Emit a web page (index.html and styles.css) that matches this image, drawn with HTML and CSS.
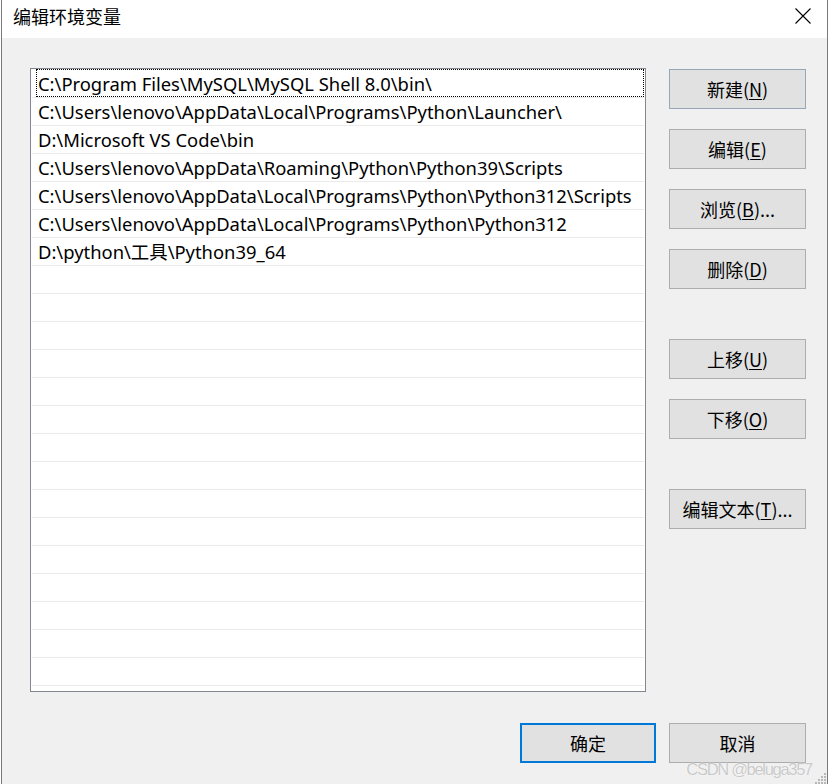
FILE: index.html
```html
<!DOCTYPE html>
<html lang="zh-CN">
<head>
<meta charset="utf-8">
<title>编辑环境变量</title>
<link rel="stylesheet" href="styles.css">
</head>
<body>
<div class="dialog">
  <div class="titlebar">
    <span class="title">编辑环境变量</span>
    <svg class="close" width="16" height="16" viewBox="0 0 16 16"><path d="M0.5 0.5 L15.5 15.5 M15.5 0.5 L0.5 15.5" stroke="#000" stroke-width="1.1" fill="none"/></svg>
  </div>
  <div class="content">
    <div class="main">
      <div class="list">
        <div class="row focused">C:\Program Files\MySQL\MySQL Shell 8.0\bin\</div>
        <div class="row">C:\Users\lenovo\AppData\Local\Programs\Python\Launcher\</div>
        <div class="row">D:\Microsoft VS Code\bin</div>
        <div class="row">C:\Users\lenovo\AppData\Roaming\Python\Python39\Scripts</div>
        <div class="row">C:\Users\lenovo\AppData\Local\Programs\Python\Python312\Scripts</div>
        <div class="row">C:\Users\lenovo\AppData\Local\Programs\Python\Python312</div>
        <div class="row">D:\python\工具\Python39_64</div>
        <div class="row"></div><div class="row"></div><div class="row"></div><div class="row"></div>
        <div class="row"></div><div class="row"></div><div class="row"></div><div class="row"></div>
        <div class="row"></div><div class="row"></div><div class="row"></div><div class="row"></div>
        <div class="row"></div><div class="row"></div><div class="row"></div><div class="row"></div>
      </div>
      <div class="side">
        <button class="btn hot">新建(<u>N</u>)</button>
        <button class="btn">编辑(<u>E</u>)</button>
        <button class="btn">浏览(<u>B</u>)...</button>
        <button class="btn">删除(<u>D</u>)</button>
        <button class="btn group">上移(<u>U</u>)</button>
        <button class="btn">下移(<u>O</u>)</button>
        <button class="btn group">编辑文本(<u>T</u>)...</button>
      </div>
    </div>
    <div class="footer">
      <button class="btn default">确定</button>
      <button class="btn">取消</button>
    </div>
  </div>
  <div class="watermark">CSDN @beluga357</div>
  <svg class="grip" width="12" height="12" viewBox="0 0 12 12">
    <rect x="9" y="1" width="2" height="2" fill="#b8b8b8"/>
    <rect x="6" y="4" width="2" height="2" fill="#b8b8b8"/>
    <rect x="9" y="4" width="2" height="2" fill="#b8b8b8"/>
    <rect x="3" y="7" width="2" height="2" fill="#b8b8b8"/>
    <rect x="6" y="7" width="2" height="2" fill="#b8b8b8"/>
    <rect x="9" y="7" width="2" height="2" fill="#b8b8b8"/>
    <rect x="0" y="10" width="2" height="2" fill="#b8b8b8"/>
    <rect x="3" y="10" width="2" height="2" fill="#b8b8b8"/>
    <rect x="6" y="10" width="2" height="2" fill="#b8b8b8"/>
    <rect x="9" y="10" width="2" height="2" fill="#b8b8b8"/>
  </svg>
</div>
</body>
</html>
```

FILE: styles.css
```css
* { box-sizing: border-box; }
html, body {
  margin: 0;
  padding: 0;
  width: 832px;
  height: 784px;
  overflow: hidden;
  background: #ffffff;
}
body {
  font-family: "Noto Sans", "Noto Sans CJK SC", sans-serif;
  font-size: 18px;
  color: #000;
}
.dialog {
  position: relative;
  margin-left: 1px;
  width: 827px;
  height: 784px;
  border-left: 1px solid #7a7a7a;
  border-right: 1px solid #7a7a7a;
  display: flex;
  flex-direction: column;
  background: #f0f0f0;
}
.titlebar {
  height: 38px;
  background: #ffffff;
  display: flex;
  align-items: center;
  padding-left: 11px;
  padding-right: 16px;
}
.title {
  font-family: "Noto Sans CJK SC", sans-serif;
  font-size: 18px;
  line-height: 1;
  margin-top: -7px;
}
.close {
  margin-left: auto;
  margin-top: -6px;
}
.content {
  flex: 1;
  padding: 30px 21px 0 28px;
  display: flex;
  flex-direction: column;
}
.main {
  display: flex;
  align-items: flex-start;
}
.list {
  width: 616px;
  height: 624px;
  background: #ffffff;
  border: 1px solid #828790;
  padding: 1px 1px 0 1px;
  overflow: hidden;
}
.row {
  position: relative;
  height: 28px;
  border-bottom: 1px solid #ebebeb;
  padding-left: 6px;
  line-height: 27px;
  white-space: nowrap;
  font-family: "Noto Sans", "Noto Sans CJK SC", sans-serif;
  font-size: 18.4px;
}
.row.focused::before {
  content: "";
  position: absolute;
  left: 4px;
  right: 0;
  top: -1px;
  bottom: 0;
  border: 1px dotted #000;
}
.side {
  margin-left: 23px;
  margin-top: 1px;
  display: flex;
  flex-direction: column;
  gap: 20px;
}
.btn {
  width: 137px;
  height: 40px;
  background: #e1e1e1;
  border: 1px solid #adadad;
  border-radius: 0;
  padding: 0;
  font-family: "Noto Sans CJK SC", "Noto Sans", sans-serif;
  font-size: 18px;
  color: #000;
  display: flex;
  align-items: center;
  justify-content: center;
}
.btn u {
  text-decoration-thickness: 1px;
  text-underline-offset: 2px;
}
.btn.hot {
  border-color: #97a7b8;
}
.btn.group {
  margin-top: 30px;
}
.footer {
  margin-top: 31px;
  display: flex;
  justify-content: flex-end;
  gap: 13px;
}
.btn.default {
  width: 136px;
  border: 2px solid #0078d7;
}
.watermark {
  position: absolute;
  right: 15px;
  bottom: 7px;
  font-family: "Liberation Sans", sans-serif;
  font-size: 16.5px;
  line-height: 1;
  color: #c9c9c9;
  text-shadow: 0 0 1px #fff, 0 0 1px #fff;
  letter-spacing: -1.3px;
}
.grip {
  position: absolute;
  right: 0;
  bottom: 0;
}
```
